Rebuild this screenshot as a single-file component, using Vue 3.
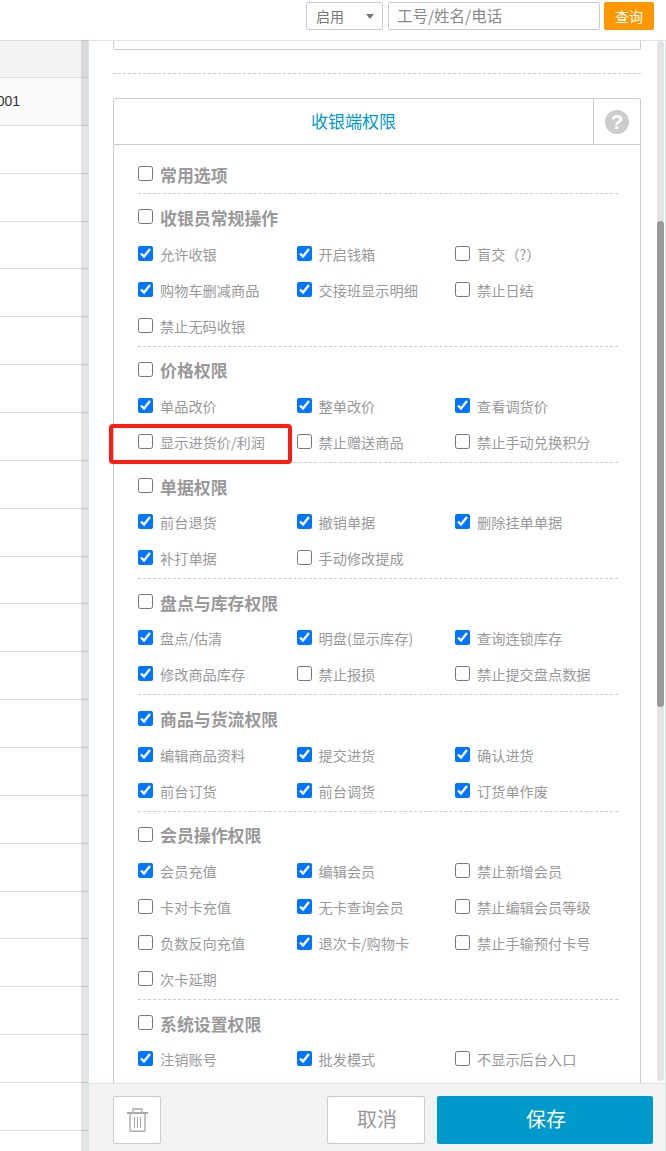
<script setup>
const rowCount = 23
const sections = [
  { title: '常用选项', on: false, items: [] },
  { title: '收银员常规操作', on: false, items: [['允许收银', 1], ['开启钱箱', 1], ['盲交（?）', 0], ['购物车删减商品', 1], ['交接班显示明细', 1], ['禁止日结', 0], ['禁止无码收银', 0]] },
  { title: '价格权限', on: false, items: [['单品改价', 1], ['整单改价', 1], ['查看调货价', 1], ['显示进货价/利润', 0], ['禁止赠送商品', 0], ['禁止手动兑换积分', 0]] },
  { title: '单据权限', on: false, items: [['前台退货', 1], ['撤销单据', 1], ['删除挂单单据', 1], ['补打单据', 1], ['手动修改提成', 0]] },
  { title: '盘点与库存权限', on: false, items: [['盘点/估清', 1], ['明盘(显示库存)', 1], ['查询连锁库存', 1], ['修改商品库存', 1], ['禁止报损', 0], ['禁止提交盘点数据', 0]] },
  { title: '商品与货流权限', on: true, items: [['编辑商品资料', 1], ['提交进货', 1], ['确认进货', 1], ['前台订货', 1], ['前台调货', 1], ['订货单作废', 1]] },
  { title: '会员操作权限', on: false, items: [['会员充值', 1], ['编辑会员', 1], ['禁止新增会员', 0], ['卡对卡充值', 0], ['无卡查询会员', 1], ['禁止编辑会员等级', 0], ['负数反向充值', 0], ['退次卡/购物卡', 1], ['禁止手输预付卡号', 0], ['次卡延期', 0]] },
  { title: '系统设置权限', on: false, items: [['注销账号', 1], ['批发模式', 1], ['不显示后台入口', 0]] }
]
</script>

<template>
  <div class="page">
    <header class="topbar">
      <div class="select"><span>启用</span><i class="caret"></i></div>
      <div class="search">工号/姓名/电话</div>
      <button class="query">查询</button>
    </header>
    <div class="main">
      <aside class="left">
        <div class="table">
          <div class="thead"></div>
          <div class="row hover"><span class="code">001</span></div>
          <div v-for="n in rowCount" :key="n" class="row"></div>
        </div>
        <div class="vbar"></div>
      </aside>
      <section class="panel">
        <div class="scroll">
          <div class="stub"></div>
          <div class="dash-line"></div>
          <div class="perm-head">
            <div class="perm-title">收银端权限</div>
            <div class="perm-help"><span class="help-dot">?</span></div>
          </div>
          <div class="perm-body">
            <div v-for="(s, i) in sections" :key="s.title" class="group" :class="{ first: i === 0 }">
              <label class="group-title"><input type="checkbox" :checked="s.on" /><span>{{ s.title }}</span></label>
              <div v-if="s.items.length" class="grid">
                <label v-for="it in s.items" :key="it[0]" class="item"><input type="checkbox" :checked="!!it[1]" /><span>{{ it[0] }}</span></label>
              </div>
            </div>
          </div>
          <div class="mark"></div>
          <div class="sbar"><div class="thumb"></div></div>
        </div>
        <footer class="footer">
          <button class="trash" aria-label="删除">
            <svg width="21" height="24" viewBox="0 0 21 24" fill="none" stroke="#aaa">
              <path d="M6 4V1h9v3" stroke-width="1.3" />
              <path d="M0 5h21" stroke-width="2" />
              <path d="M3 6V22.3q0 1 1 1h13q1 0 1-1V6" stroke-width="1.4" />
              <path d="M7.5 9v11M10.5 9v11M13.5 9v11" stroke-width="1.1" />
            </svg>
          </button>
          <button class="cancel">取消</button>
          <button class="save">保存</button>
        </footer>
      </section>
    </div>
  </div>
</template>

<style scoped>
* { box-sizing: border-box; }
.page {
  width: 666px;
  height: 1151px;
  overflow: hidden;
  background: #fff;
  font-family: "Noto Sans CJK SC", "Liberation Sans", sans-serif;
  display: flex;
  flex-direction: column;
}
.topbar {
  height: 40px;
  flex: none;
  display: flex;
  align-items: flex-start;
  padding: 2px 12px 0 0;
  justify-content: flex-end;
}
.select {
  width: 77px;
  height: 28px;
  border: 1px solid #ccc;
  border-radius: 2px;
  display: flex;
  align-items: center;
  justify-content: space-between;
  padding: 0 8px 0 9px;
  font-size: 14px;
  color: #777;
}
.caret {
  width: 0;
  height: 0;
  border-left: 4.5px solid transparent;
  border-right: 4.5px solid transparent;
  border-top: 5px solid #777;
}
.search {
  width: 212px;
  height: 28px;
  margin-left: 5px;
  border: 1px solid #ccc;
  border-radius: 2px;
  padding-left: 8px;
  font-size: 15.5px;
  line-height: 25px;
  color: #888;
}
.query {
  width: 50px;
  height: 28px;
  margin-left: 4px;
  border: 0;
  border-radius: 2px;
  background: #ff9800;
  color: #fff;
  font: 14px "Noto Sans CJK SC", sans-serif;
  padding: 0;
}
.main {
  flex: 1;
  display: flex;
  min-height: 0;
}
.left {
  position: relative;
  width: 88px;
  flex: none;
  overflow: hidden;
}
.thead {
  height: 38px;
  background: #f3f3f3;
  border-top: 1px solid #ddd;
  border-bottom: 1px solid #ddd;
}
.row {
  height: 47.87px;
  border-bottom: 1px solid #ddd;
  display: flex;
  align-items: center;
  justify-content: flex-end;
  padding-right: 68px;
}
.row.hover { background: #f9f9f9; }
.code {
  font: 14px "Liberation Sans", Arial, sans-serif;
  color: #333;
  white-space: nowrap;
}
.vbar {
  position: absolute;
  top: 0;
  right: 0;
  bottom: 0;
  width: 7px;
  background: rgba(0, 0, 0, 0.11);
}
.panel {
  flex: 1;
  min-width: 0;
  display: flex;
  flex-direction: column;
  border-top: 1px solid #d6e7ea;
  border-left: 1px solid #d6e7ea;
  border-right: 1px solid #d6e7ea;
}
.scroll {
  position: relative;
  height: 1042px;
  flex: none;
  overflow: hidden;
  padding: 0 24px;
}
.stub {
  height: 9px;
  border: 1px solid #ccc;
  border-top: 0;
  border-radius: 0 0 2px 2px;
}
.dash-line {
  margin-top: 23px;
  border-top: 1px dashed #ccc;
}
.perm-head {
  margin-top: 24px;
  height: 47px;
  display: flex;
  border: 1px solid #ccc;
  border-radius: 2px 2px 0 0;
}
.perm-title {
  flex: 1;
  display: flex;
  align-items: center;
  justify-content: center;
  padding-bottom: 2px;
  font-size: 17px;
  color: #0099cc;
}
.perm-help {
  width: 47px;
  border-left: 1px solid #ccc;
  display: flex;
  align-items: center;
  justify-content: center;
}
.help-dot {
  width: 24px;
  height: 24px;
  border-radius: 50%;
  background: #ccc;
  color: #fff;
  font: bold 20px/24px "Liberation Sans", Arial, sans-serif;
  text-align: center;
}
.perm-body {
  height: 960px;
  border-left: 1px solid #ccc;
  border-right: 1px solid #ccc;
  padding: 0 22px 0 24px;
}
.group {
  padding: 5px 0 2px;
  border-bottom: 1px dashed #ccc;
}
.group:last-child { border-bottom: 0; }
.group.first { padding: 11px 0 1px; }
.group-title {
  height: 36.3px;
  display: flex;
  align-items: center;
  font-size: 16.9px;
  font-weight: 700;
  color: #999;
}
.group-title span { margin-left: 7px; }
.grid {
  display: grid;
  grid-template-columns: repeat(3, 158.5px);
  grid-auto-rows: 36px;
}
.item {
  display: flex;
  align-items: center;
  font-size: 14.2px;
  color: #999;
  white-space: nowrap;
}
.item span { margin-left: 7px; }
input[type="checkbox"] {
  width: 15px;
  height: 15px;
  margin: 0 0 1px;
  flex: none;
}
.mark {
  position: absolute;
  left: 20px;
  top: 383px;
  width: 183px;
  height: 40px;
  border: 4px solid #ff1d12;
  border-radius: 4px;
}
.sbar {
  position: absolute;
  top: 0;
  left: 568px;
  width: 7px;
  height: 1040px;
  background: #e3e3e3;
  border-radius: 4px;
}
.thumb {
  margin-top: 180px;
  height: 486px;
  background: #999;
  border-radius: 4px;
}
.footer {
  flex: 1;
  background: #f2f2f2;
  border-top: 1px solid #d6e7ea;
  display: flex;
  align-items: flex-start;
  padding: 12px 12px 0 24px;
}
.footer button {
  height: 48px;
  border-radius: 2px;
  padding: 0 0 4px 2px;
  font: 20px "Noto Sans CJK SC", sans-serif;
}
.footer .trash {
  width: 48px;
  padding: 0;
  background: #fff;
  border: 1px solid #ccc;
  display: flex;
  align-items: center;
  justify-content: center;
}
.cancel {
  width: 98px;
  margin-left: auto;
  background: #fff;
  border: 1px solid #ccc;
  color: #999;
}
.save {
  width: 216px;
  margin-left: 12px;
  background: #0099cc;
  border: 0;
  color: #fff;
}
</style>
